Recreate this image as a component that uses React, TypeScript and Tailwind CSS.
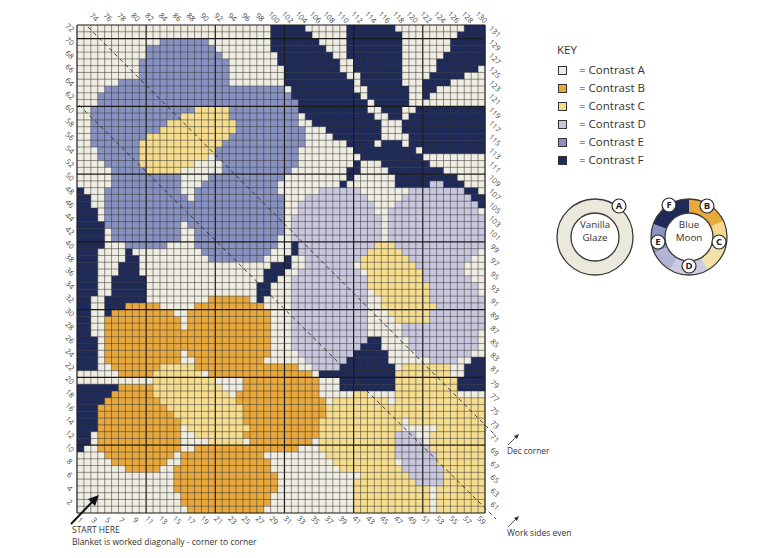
import { useMemo } from "react";

type Pt = [number, number];
type Test = (x: number, y: number) => boolean;

// chart grid geometry (page pixels)
const X0 = 77;
const Y0 = 25;
const COLS = 59;
const ROWS = 72;
const GW = 408;
const GH = 488;
const CW = GW / COLS;
const CH = GH / ROWS;

const A = "#efece1";
const B = "#e8a83b";
const C = "#f6dd8e";
const D = "#c9c7de";
const E = "#8892c0";
const F = "#1e2a5a";

const FONT = "'Open Sans', 'Liberation Sans', sans-serif";

function poly(pts: Pt[]): Test {
  return (x, y) => {
    let inside = false;
    for (let i = 0, j = pts.length - 1; i < pts.length; j = i++) {
      const [xi, yi] = pts[i];
      const [xj, yj] = pts[j];
      if (yi > y !== yj > y && x < ((xj - xi) * (y - yi)) / (yj - yi) + xi) inside = !inside;
    }
    return inside;
  };
}

function blob(cx: number, cy: number, a: number, b: number, p = 2.4, rot = 0): Test {
  const r = (rot * Math.PI) / 180;
  const c = Math.cos(r);
  const s = Math.sin(r);
  return (x, y) => {
    const dx = x - cx;
    const dy = y - cy;
    const u = dx * c + dy * s;
    const v = -dx * s + dy * c;
    return Math.abs(u / a) ** p + Math.abs(v / b) ** p <= 1;
  };
}

function seg(x1: number, y1: number, x2: number, y2: number, w: number): Test {
  return (x, y) => {
    const vx = x2 - x1;
    const vy = y2 - y1;
    let t = ((x - x1) * vx + (y - y1) * vy) / (vx * vx + vy * vy);
    t = Math.max(0, Math.min(1, t));
    const px = x1 + t * vx - x;
    const py = y1 + t * vy - y;
    return Math.sqrt(px * px + py * py) <= w;
  };
}

// painted in order, last match wins
const LAYERS: [string, Test][] = [
  // leafy branch, top right
  [F, poly([[268, 25], [485, 25], [485, 212], [455, 190], [400, 189], [388, 170], [366, 156], [330, 136], [303, 114], [292, 95], [268, 38]])],
  [A, poly([[303, 25], [349, 25], [350, 62], [365, 88], [380, 110], [398, 127], [417, 150], [460, 154], [485, 152], [485, 198], [450, 174], [425, 160], [410, 147], [388, 135], [372, 115], [357, 92], [340, 65]])],
  [A, poly([[398, 25], [464, 25], [423, 87], [418, 108], [402, 126], [386, 142], [371, 156], [365, 151], [380, 137], [396, 121], [408, 104], [405, 80], [401, 50]])],
  [A, poly([[485, 66], [485, 104], [415, 104], [442, 86]])],
  [F, seg(368, 152, 258, 300, 3.8)],
  [F, poly([[256, 302], [258, 285], [265, 272], [274, 265], [278, 268], [274, 285], [266, 298], [260, 304]])],
  // leaves on the left edge
  [F, poly([[77, 188], [84, 190], [97, 213], [104, 230], [101, 250], [97, 275], [94, 300], [90, 330], [100, 342], [100, 374], [77, 374]])],
  [F, poly([[130, 248], [140, 265], [148, 290], [148, 306], [133, 322], [110, 338], [103, 330], [106, 300], [116, 272]])],
  [F, poly([[77, 382], [138, 382], [77, 456]])],
  // blue flower
  [E, blob(183, 78, 45, 40)],
  [E, blob(137, 128, 45, 48)],
  [E, blob(258, 135, 44, 52)],
  [E, blob(146, 208, 40, 43)],
  [E, blob(237, 217, 47, 47)],
  [C, blob(186, 141, 52, 24, 2.5, -28)],
  // lavender flower
  [D, blob(337, 228, 44, 42, 2)],
  [D, blob(435, 230, 50, 46, 2)],
  [D, blob(329, 313, 41, 56)],
  [D, blob(443, 314, 40, 48)],
  [C, blob(398, 284, 47, 25, 2.3, 55)],
  [F, poly([[370, 338], [378, 338], [392, 366], [398, 372], [398, 379], [390, 392], [343, 392], [341, 379], [322, 379], [322, 372], [343, 366], [357, 352]])],
  [F, poly([[472, 357], [485, 357], [485, 392], [460, 392], [460, 378], [468, 365]])],
  // mustard flower
  [B, blob(144, 341, 41, 37)],
  [B, blob(229, 336, 44, 40)],
  [B, blob(140, 428, 42, 43)],
  [B, blob(280, 408, 43, 44)],
  [B, blob(225, 480, 50, 38)],
  [C, blob(200, 405, 55, 27, 2.3, 40)],
  // pale yellow flower
  [C, blob(425, 393, 33, 32)],
  [C, blob(362, 433, 42, 39)],
  [C, blob(468, 450, 36, 52)],
  [C, blob(392, 495, 40, 32)],
  [C, blob(468, 505, 34, 30)],
  [D, blob(418, 459, 33, 16, 2.2, 53)],
];

type Run = { r: number; c0: number; c1: number; fill: string };

function buildRuns(): Run[] {
  const runs: Run[] = [];
  for (let r = 0; r < ROWS; r++) {
    let cur = "";
    let start = 0;
    for (let c = 0; c <= COLS; c++) {
      let col = "";
      if (c < COLS) {
        const x = X0 + (c + 0.5) * CW;
        const y = Y0 + (r + 0.5) * CH;
        col = A;
        for (const [fill, test] of LAYERS) if (test(x, y)) col = fill;
      }
      if (col !== cur) {
        if (cur) runs.push({ r, c0: start, c1: c, fill: cur });
        cur = col;
        start = c;
      }
    }
  }
  return runs;
}

function Label({ x, y, n }: { x: number; y: number; n: number }) {
  return (
    <text
      x={x}
      y={y}
      transform={`rotate(45 ${x} ${y})`}
      textAnchor="middle"
      dominantBaseline="central"
      fontSize={7.5}
      fill="#444"
      fontFamily={FONT}
    >
      {n}
    </text>
  );
}

function Chart() {
  const runs = useMemo(buildRuns, []);
  const bottom = Array.from({ length: 30 }, (_, i) => 1 + i * 2);
  const top = Array.from({ length: 29 }, (_, i) => 74 + i * 2);
  const sides = Array.from({ length: 36 }, (_, i) => 2 + i * 2);
  const colX = (n: number) => X0 + (n - 0.5) * CW;
  const rowY = (k: number) => Y0 + GH - (k - 0.5) * CH;

  return (
    <svg width={555} height={524} className="block overflow-visible">
      {runs.map((run, i) => (
        <rect
          key={i}
          x={X0 + run.c0 * CW}
          y={Y0 + run.r * CH}
          width={(run.c1 - run.c0) * CW + 0.3}
          height={CH + 0.3}
          fill={run.fill}
        />
      ))}
      {Array.from({ length: COLS + 1 }, (_, i) => {
        const x = X0 + i * CW;
        const thick = i % 10 === 0 || i === COLS;
        return (
          <line key={`v${i}`} x1={x} y1={Y0} x2={x} y2={Y0 + GH} stroke={thick ? "#1b1b1b" : "#333"} strokeOpacity={thick ? 1 : 0.8} strokeWidth={thick ? 1.2 : 0.65} />
        );
      })}
      {Array.from({ length: ROWS + 1 }, (_, j) => {
        const y = Y0 + GH - j * CH;
        const thick = j % 10 === 0 || j === ROWS;
        return (
          <line key={`h${j}`} x1={X0} y1={y} x2={X0 + GW} y2={y} stroke={thick ? "#1b1b1b" : "#333"} strokeOpacity={thick ? 1 : 0.8} strokeWidth={thick ? 1.2 : 0.65} />
        );
      })}

      {/* diagonal guides */}
      <line x1={88} y1={27} x2={495} y2={435} stroke="#2e2e2e" strokeWidth={0.9} strokeDasharray="4 3.5" />
      <line x1={79} y1={105} x2={496} y2={519} stroke="#2e2e2e" strokeWidth={0.9} strokeDasharray="4 3.5" />

      {bottom.map((n) => (
        <Label key={`b${n}`} x={colX(n)} y={520} n={n} />
      ))}
      {top.map((n) => (
        <Label key={`t${n}`} x={colX(n - 71)} y={17} n={n} />
      ))}
      {sides.map((k) => (
        <Label key={`l${k}`} x={70} y={rowY(k) - 1} n={k} />
      ))}
      {sides.map((k) => (
        <Label key={`r${k}`} x={495} y={rowY(k) + 3} n={59 + k} />
      ))}

      {/* start arrow */}
      <line x1={71} y1={524} x2={94} y2={500} stroke="#111" strokeWidth={2} />
      <polygon points="99,495 88,499 95,506" fill="#111" />

      {/* notes on the right */}
      <line x1={508} y1={445} x2={517} y2={436} stroke="#333" strokeWidth={0.8} />
      <polygon points="519,434 514,436 517,439" fill="#333" />
      <text x={507} y={454} fontSize={8.3} fill="#333" fontFamily={FONT}>
        Dec corner
      </text>
      <line x1={508} y1={527} x2={517} y2={518} stroke="#333" strokeWidth={0.8} />
      <polygon points="519,516 514,518 517,521" fill="#333" />
      <text x={507} y={536} fontSize={8.5} fill="#333" fontFamily={FONT}>
        Work sides even
      </text>
    </svg>
  );
}

const KEY = [
  { fill: A, label: "A" },
  { fill: B, label: "B" },
  { fill: C, label: "C" },
  { fill: D, label: "D" },
  { fill: E, label: "E" },
  { fill: F, label: "F" },
];

function sector(cx: number, cy: number, r0: number, r1: number, a0: number, a1: number) {
  const pt = (r: number, a: number) => {
    const t = (a * Math.PI) / 180;
    return `${(cx + r * Math.sin(t)).toFixed(2)} ${(cy - r * Math.cos(t)).toFixed(2)}`;
  };
  const large = a1 - a0 > 180 ? 1 : 0;
  return `M${pt(r1, a0)} A${r1} ${r1} 0 ${large} 1 ${pt(r1, a1)} L${pt(r0, a1)} A${r0} ${r0} 0 ${large} 0 ${pt(r0, a0)} Z`;
}

const MOON: [number, number, string][] = [
  [0, 65, "#e9aa3c"],
  [65, 105, "#f6d98a"],
  [105, 150, "#f4e2a8"],
  [150, 210, "#cdcbe0"],
  [210, 245, "#b0b4d5"],
  [245, 290, "#8c95c2"],
  [290, 360, "#1f2a58"],
];

function Badge({ x, y, t }: { x: number; y: number; t: string }) {
  return (
    <g>
      <circle cx={x} cy={y} r={7} fill="#fff" stroke="#2b2b2b" strokeWidth={1.2} />
      <text x={x} y={y + 3.3} textAnchor="middle" fontSize={9.5} fontWeight={700} fill="#222" fontFamily={FONT}>
        {t}
      </text>
    </g>
  );
}

function Yarns() {
  // centres at (40, 43) and (134, 43)
  return (
    <svg width={180} height={92} className="block overflow-visible">
      <circle cx={40} cy={43} r={38} fill="#ebe8dc" stroke="#3a3a3a" strokeWidth={1.3} />
      <circle cx={40} cy={43} r={24} fill="#fff" stroke="#3a3a3a" strokeWidth={1.3} />
      <text x={40} y={34} textAnchor="middle" fontSize={9.8} fill="#333" fontFamily={FONT}>
        Vanilla
      </text>
      <text x={40} y={47} textAnchor="middle" fontSize={9.8} fill="#333" fontFamily={FONT}>
        Glaze
      </text>
      <Badge x={64} y={12} t="A" />

      {MOON.map(([a0, a1, fill]) => (
        <path key={a0} d={sector(134, 43, 24, 38, a0, a1)} fill={fill} />
      ))}
      <circle cx={134} cy={43} r={38} fill="none" stroke="#3a3a3a" strokeWidth={1.3} />
      <circle cx={134} cy={43} r={24} fill="#fff" stroke="#3a3a3a" strokeWidth={1.3} />
      <text x={134} y={34} textAnchor="middle" fontSize={9.8} fill="#333" fontFamily={FONT}>
        Blue
      </text>
      <text x={134} y={47} textAnchor="middle" fontSize={9.8} fill="#333" fontFamily={FONT}>
        Moon
      </text>
      <Badge x={114} y={11} t="F" />
      <Badge x={152} y={12} t="B" />
      <Badge x={164} y={48} t="C" />
      <Badge x={134} y={72} t="D" />
      <Badge x={103} y={48} t="E" />
    </svg>
  );
}

export default function App() {
  return (
    <main className="flex w-[768px] h-[558px] overflow-hidden bg-white text-[#333]" style={{ fontFamily: FONT }}>
      <div className="flex flex-col w-[555px] shrink-0">
        <Chart />
        <div className="pl-[72px] text-[8.5px] leading-[12px] text-[#333]">
          <p>START HERE</p>
          <p>Blanket is worked diagonally - corner to corner</p>
        </div>
      </div>

      <aside className="flex flex-col pt-[43px]">
        <h3 className="ml-[2px] text-[11.5px] leading-[14px] font-normal">KEY</h3>
        <ul className="mt-[4px] ml-[3px]">
          {KEY.map((k) => (
            <li key={k.label} className="flex items-center h-[18px]">
              <span className="w-[9px] h-[9px] border border-[#333]" style={{ backgroundColor: k.fill }} />
              <span className="ml-[12px] text-[11.5px] leading-[18px]">= Contrast {k.label}</span>
            </li>
          ))}
        </ul>
        <div className="mt-[25px]">
          <Yarns />
        </div>
      </aside>
    </main>
  );
}
